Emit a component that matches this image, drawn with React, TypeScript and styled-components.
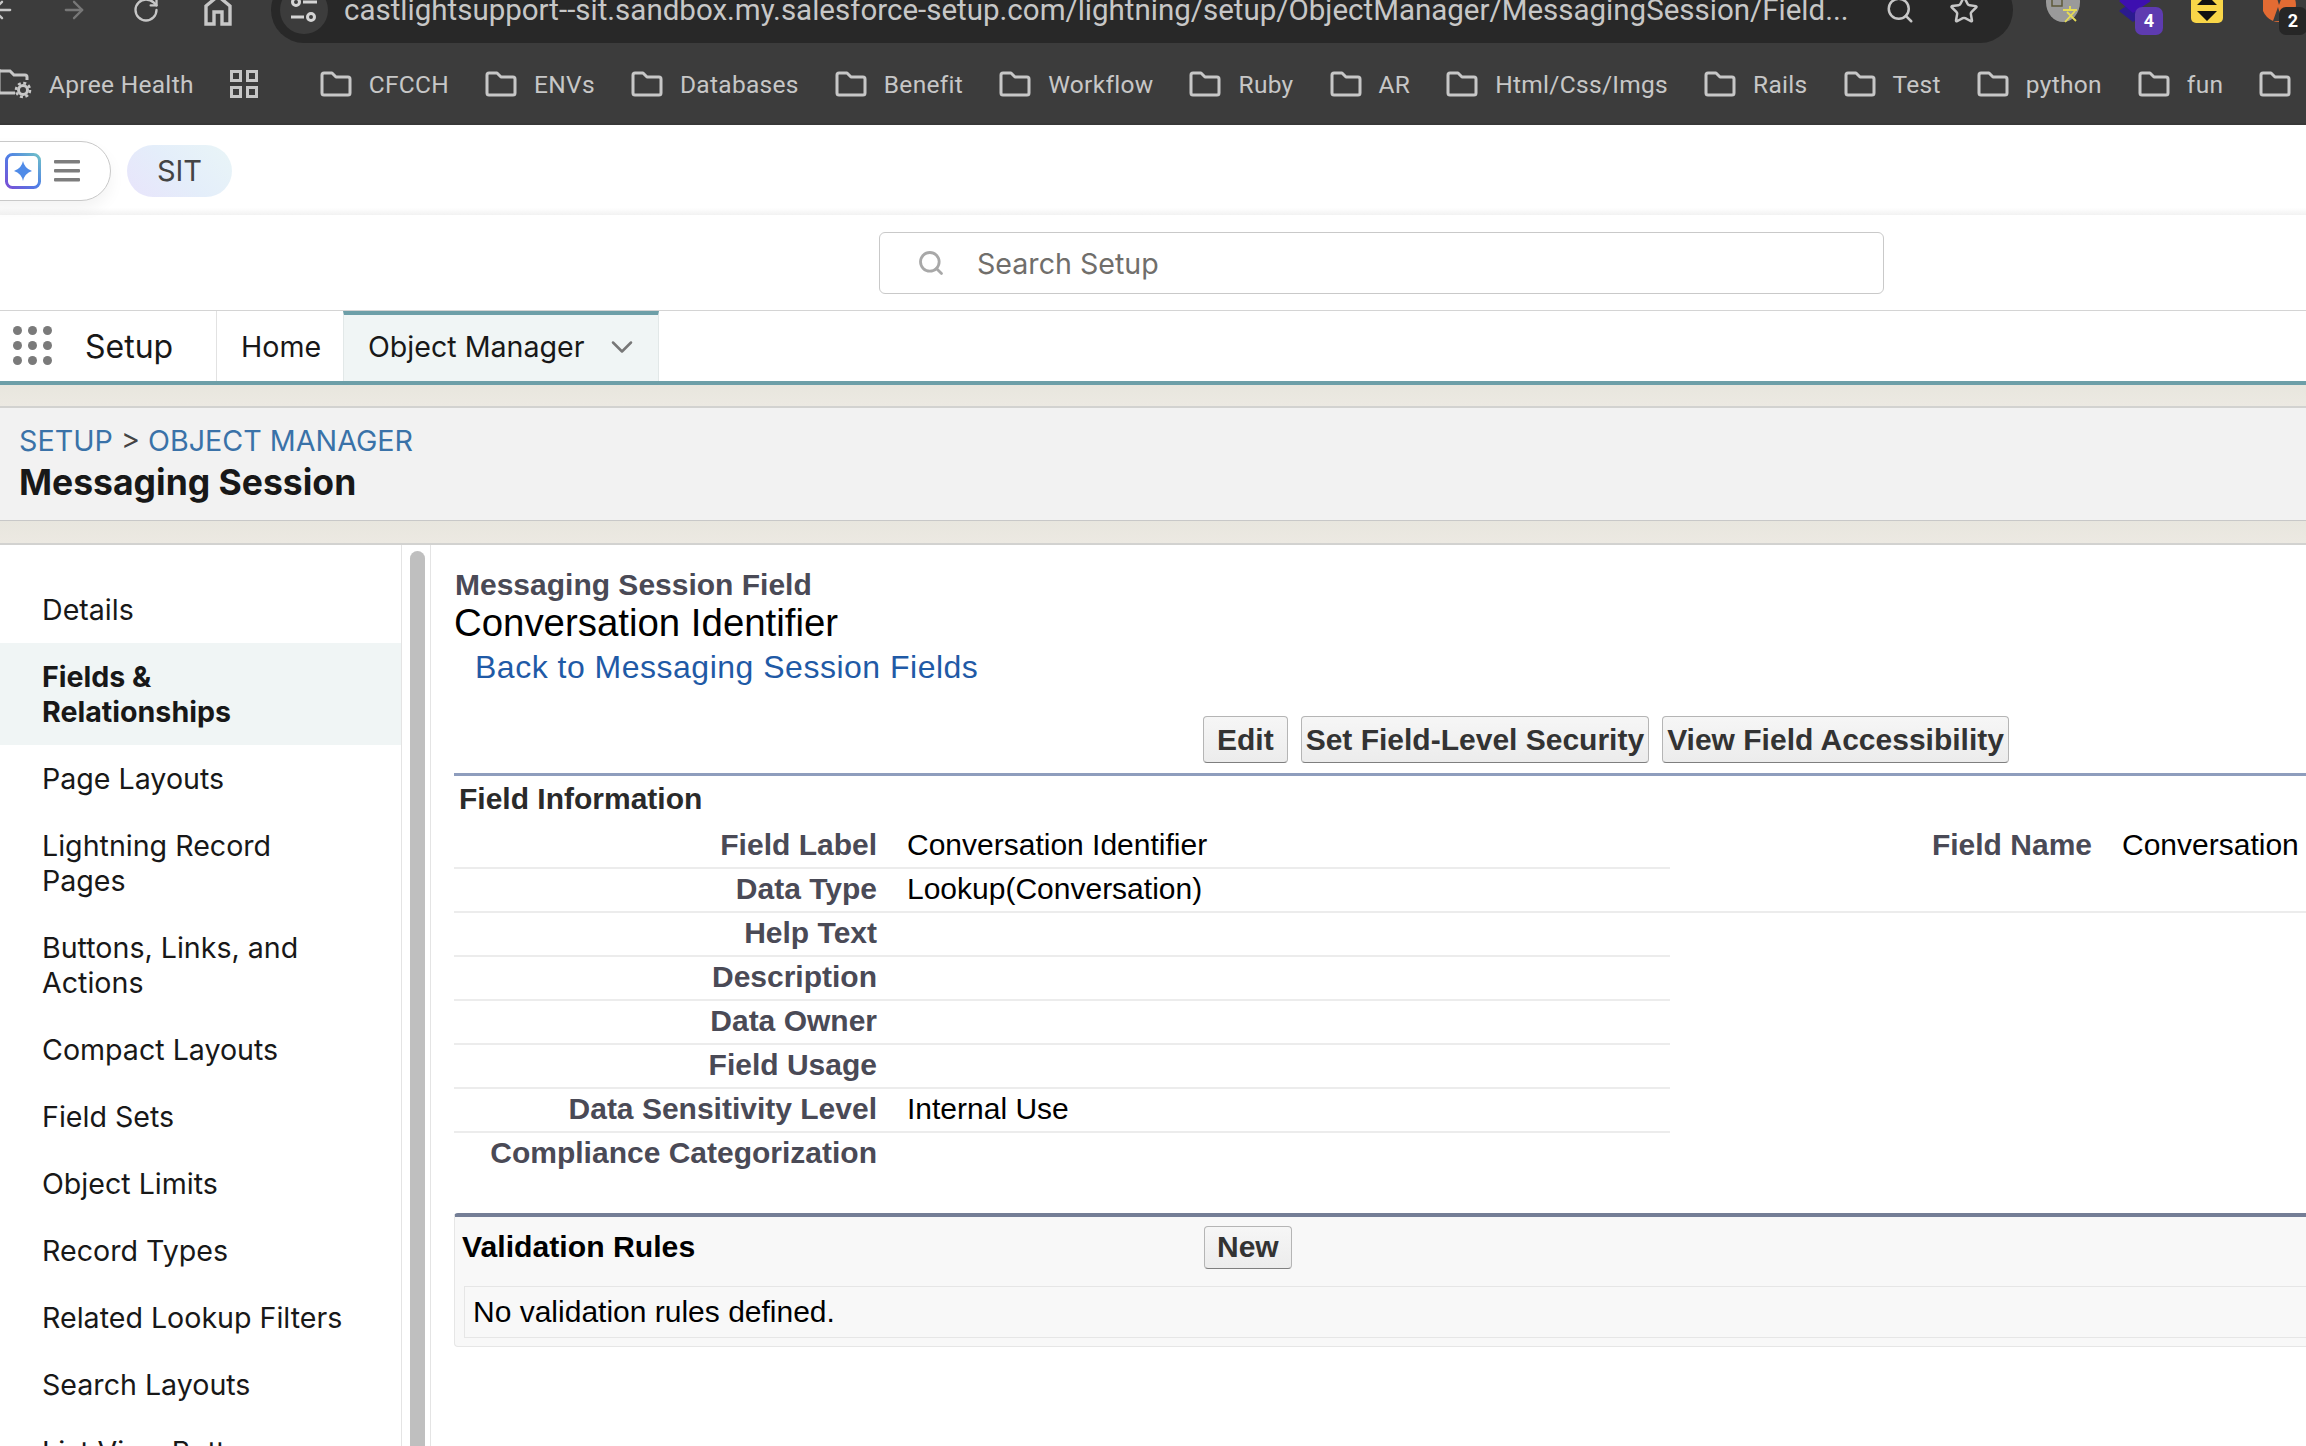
import styled, { createGlobalStyle } from "styled-components";
import { ArrowLeft, ArrowRight, RotateCw, ChevronDown, Search, Star } from "lucide-react";

const GlobalStyle = createGlobalStyle`
  html, body { margin: 0; padding: 0; background: #fff; }
  body { width: 2306px; height: 1446px; overflow: hidden; font-family: "Inter", "Liberation Sans", sans-serif; }
  * { box-sizing: border-box; }
`;

const Page = styled.div`
  width: 2306px;
  height: 1446px;
  overflow: hidden;
  display: flex;
  flex-direction: column;
`;

/* browser chrome */
const Chrome = styled.header`
  height: 125px;
  flex: none;
  background: #3c3c3c;
  overflow: hidden;
  border-bottom: 2px solid #383838;
`;
const Toolbar = styled.div`
  display: flex;
  align-items: center;
  height: 66px;
  margin-top: -23px;
  margin-left: -12px;
  color: #c7c7c7;
`;
const NavIcon = styled.span<{ $dim?: boolean }>`
  display: flex;
  width: 28px;
  margin-right: 44px;
  color: ${(p) => (p.$dim ? "#777" : "#c7c7c7")};
`;
const UrlPill = styled.div`
  width: 1742px;
  height: 66px;
  margin-left: -5px;
  border-radius: 33px;
  background: #282828;
  display: flex;
  align-items: center;
  padding-left: 9px;
`;
const TuneCircle = styled.span`
  width: 48px;
  height: 48px;
  border-radius: 50%;
  background: #3c3c3c;
  display: flex;
  align-items: center;
  justify-content: center;
  flex: none;
`;
const UrlText = styled.span`
  margin-left: 16px;
  width: 1518px;
  font-family: "Roboto", "Liberation Sans", sans-serif;
  font-size: 29.5px;
  font-variant-ligatures: none;
  color: #c7c7c7;
  white-space: nowrap;
  flex: none;
`;
const UrlIcon = styled.span`
  display: flex;
  margin-left: 12px;
  width: 52px;
  justify-content: center;
  color: #c7c7c7;
`;
const Ext = styled.span<{ $left: number }>`
  position: relative;
  display: block;
  flex: none;
  width: 40px;
  height: 34px;
  margin-top: 8px;
  margin-left: ${(p) => p.$left}px;
`;
const Badge = styled.span<{ $bg: string }>`
  position: absolute;
  top: 10px;
  left: 16px;
  width: 28px;
  height: 28px;
  border-radius: 7px;
  background: ${(p) => p.$bg};
  color: #fff;
  font-family: "Roboto", sans-serif;
  font-weight: 700;
  font-size: 18px;
  line-height: 28px;
  text-align: center;
`;
const Bookmarks = styled.div`
  display: flex;
  align-items: center;
  height: 62px;
  margin-top: 10px;
  margin-left: -2px;
  color: #c7c7c7;
  font-family: "Roboto", "Liberation Sans", sans-serif;
  font-size: 24.5px;
  letter-spacing: 0.3px;
  white-space: nowrap;
`;
const Bookmark = styled.span`
  display: flex;
  align-items: center;
  gap: 17px;
  margin-right: 36px;
`;
const Separator = styled.span`
  width: 2px;
  height: 32px;
  background: #6a6a6a;
  margin: 0 32px 0 -6px;
`;

/* salesforce header */
const AppHeader = styled.div`
  height: 90px;
  flex: none;
  display: flex;
  align-items: center;
  gap: 16px;
  padding-top: 2px;
  background: linear-gradient(#fff 0, #fff 92%, #f2f2f2 100%);
`;
const MenuPill = styled.div`
  width: 141px;
  height: 60px;
  margin-left: -30px;
  border: 1px solid #c9c9c9;
  border-radius: 30px;
  background: #fff;
  box-shadow: 0 8px 16px rgba(0, 0, 0, 0.05);
  display: flex;
  align-items: center;
  padding-left: 34px;
  gap: 13px;
`;
const EnvPill = styled.div`
  width: 105px;
  height: 52px;
  border-radius: 26px;
  background: linear-gradient(45deg, #e8e4fb, #e4eefa 50%, #e9f5f7);
  color: #444;
  font-size: 29px;
  line-height: 52px;
  text-align: center;
`;
const SearchRow = styled.div`
  height: 95px;
  flex: none;
  padding: 17px 0 0 879px;
`;
const SearchBox = styled.div`
  width: 1005px;
  height: 62px;
  border: 1px solid #c9c9c9;
  border-radius: 6px;
  display: flex;
  align-items: center;
  padding-left: 37px;
  gap: 32px;
  color: #706e6b;
  font-size: 28.6px;
`;
const NavBar = styled.nav`
  height: 75px;
  flex: none;
  display: flex;
  border-top: 1px solid #d4d4d4;
  border-bottom: 4px solid #6d9fa8;
`;
const Waffle = styled.div`
  display: grid;
  grid-template-columns: repeat(3, 9px);
  gap: 6px;
  margin: 15px 0 0 13px;
  width: 39px;
  align-content: start;
`;
const Dot = styled.i`
  width: 9px;
  height: 9px;
  border-radius: 50%;
  background: #7a7a7a;
`;
const AppName = styled.div`
  width: 165px;
  padding-left: 33px;
  font-size: 32px;
  line-height: 72px;
  color: #181818;
  border-right: 1px solid #e2e2e2;
`;
const NavTab = styled.div<{ $active?: boolean }>`
  display: flex;
  align-items: center;
  width: ${(p) => (p.$active ? "316px" : "126px")};
  padding: 0 0 3px ${(p) => (p.$active ? "24px" : "23px")};
  gap: 19px;
  font-size: 28.6px;
  color: #181818;
  border-top: 4px solid ${(p) => (p.$active ? "#6d9fa8" : "transparent")};
  background: ${(p) => (p.$active ? "#f0f5f5" : "#fff")};
  border-left: 1px solid ${(p) => (p.$active ? "#e2e8e8" : "transparent")};
  border-right: 1px solid ${(p) => (p.$active ? "#e2e8e8" : "transparent")};
`;
const BeigeStrip = styled.div<{ $h: number }>`
  height: ${(p) => p.$h}px;
  flex: none;
  background: linear-gradient(#e8e6de, #ece9e2);
  border-bottom: 2px solid #d2d2d0;
`;
const PageHead = styled.div`
  height: 113px;
  flex: none;
  background: #f2f2f2;
  border-bottom: 1px solid #c8c8c8;
  padding: 14px 0 0 19px;
`;
const Crumbs = styled.div`
  font-size: 28.7px;
  line-height: 38px;
  color: #444;
`;
const CrumbLink = styled.span`
  color: #3a72a8;
`;
const ObjectTitle = styled.h1`
  margin: 2px 0 0;
  font-size: 35.5px;
  line-height: 42px;
  font-weight: 700;
  color: #181818;
`;

/* body */
const Main = styled.div`
  flex: 1;
  display: flex;
  min-height: 0;
`;
const Sidebar = styled.ul`
  width: 402px;
  flex: none;
  margin: 0;
  padding: 31px 0 0;
  list-style: none;
  border-right: 1px solid #e4e4e4;
`;
const SideItem = styled.li<{ $active?: boolean }>`
  padding: 16px 58px 16px 42px;
  font-size: 28.6px;
  line-height: 35px;
  color: #181818;
  font-weight: ${(p) => (p.$active ? 700 : 400)};
  background: ${(p) => (p.$active ? "#f0f5f5" : "#fff")};
`;
const ScrollTrack = styled.div`
  width: 29px;
  flex: none;
  padding: 6px 5px 0 8px;
  border-right: 1px solid #e4e4e4;
`;
const ScrollThumb = styled.div`
  height: 100%;
  border-radius: 8px 8px 0 0;
  background: #bfbfbf;
`;
const Content = styled.div`
  flex: 1;
  min-width: 0;
  padding: 22px 0 0 23px;
  font-family: "Liberation Sans", Arial, sans-serif;
`;
const Eyebrow = styled.div`
  margin-left: 1px;
  font-size: 30px;
  line-height: 36px;
  font-weight: 700;
  color: #4a4a56;
`;
const FieldTitle = styled.h2`
  margin: 0;
  font-size: 38.4px;
  line-height: 40px;
  font-weight: 400;
  color: #000;
`;
const BackLink = styled.a`
  display: block;
  margin: 4px 0 0 21px;
  font-size: 32px;
  line-height: 40px;
  letter-spacing: 0.5px;
  color: #1f5aa6;
`;
const ButtonRow = styled.div`
  display: flex;
  gap: 13px;
  margin: 29px 0 10px 749px;
`;
const ClassicButton = styled.button<{ $pad: number; $h?: number }>`
  height: ${(p) => p.$h ?? 47}px;
  padding: 0 ${(p) => p.$pad}px;
  font-family: inherit;
  font-size: 30px;
  font-weight: 700;
  color: #333;
  background: linear-gradient(#f6f6f6, #ececec);
  border: 1px solid #b5b5b5;
  border-bottom-color: #7f7f7f;
  border-radius: 4px;
  white-space: nowrap;
`;
const SectionHead = styled.h3`
  margin: 0 0 4px;
  padding: 1px 0 0 5px;
  border-top: 3px solid #8e9dbd;
  font-size: 30px;
  line-height: 44px;
  font-weight: 700;
  color: #2a2a2a;
`;
const FieldGrid = styled.div`
  display: flex;
`;
const FieldColumn = styled.div<{ $w?: number }>`
  flex: ${(p) => (p.$w ? `0 0 ${p.$w}px` : "1")};
`;
const FieldRow = styled.div<{ $plain?: boolean; $h?: number }>`
  display: flex;
  height: ${(p) => p.$h ?? 44}px;
  padding-top: 3px;
  border-bottom: 2px solid ${(p) => (p.$plain ? "transparent" : "#ececec")};
  font-size: 30px;
  line-height: 34px;
`;
const FieldKey = styled.div<{ $w: number }>`
  width: ${(p) => p.$w}px;
  flex: none;
  text-align: right;
  font-weight: 700;
  color: #4a4a56;
`;
const FieldValue = styled.div`
  margin-left: 30px;
  white-space: nowrap;
  color: #000;
`;
const RelatedBlock = styled.section`
  margin-top: 36px;
  height: 134px;
  background: #f8f8f8;
  border: 1px solid #e6e6e6;
  border-top: 4px solid #747e96;
  border-right: 0;
  border-radius: 4px 0 0 4px;
`;
const RelatedHead = styled.div`
  display: flex;
  align-items: center;
  height: 69px;
  padding-left: 7px;
  padding-bottom: 9px;
`;
const RelatedTitle = styled.h3`
  margin: 0;
  width: 742px;
  font-size: 30.2px;
  font-weight: 700;
  color: #000;
`;
const RelatedBody = styled.div`
  margin-left: 9px;
  height: 52px;
  padding-left: 8px;
  background: #f8f8f8;
  border: 1px solid #e6e6e6;
  border-right: 0;
  font-size: 30px;
  line-height: 50px;
  color: #000;
`;

const FolderIcon = () => (
  <svg width="32" height="26" viewBox="0 0 32 26" fill="none" stroke="#c7c7c7" strokeWidth="3" strokeLinejoin="round">
    <path d="M2 4 Q2 2 4 2 H12 L16 6 H28 Q30 6 30 8 V22 Q30 24 28 24 H4 Q2 24 2 22 Z" />
  </svg>
);

const ChromeHome = () => (
  <svg width="28" height="32" viewBox="0 0 28 32" fill="none" stroke="#c7c7c7" strokeWidth="3.4">
    <path d="M2 30 V12 L14 2 L26 12 V30 H18 V18 H10 V30 Z" />
  </svg>
);

const TuneIcon = () => (
  <svg width="28" height="26" viewBox="0 0 28 26" fill="none" stroke="#d4d4d4" strokeWidth="3">
    <circle cx="6" cy="5" r="3.5" />
    <path d="M13 5 H27 M1 20 H14" />
    <circle cx="21" cy="20" r="3.5" />
  </svg>
);

const AppsIcon = () => (
  <svg width="28" height="28" viewBox="0 0 28 28" fill="none" stroke="#c7c7c7" strokeWidth="3">
    <rect x="1.5" y="1.5" width="9" height="9" />
    <rect x="17.5" y="1.5" width="9" height="9" />
    <rect x="1.5" y="17.5" width="9" height="9" />
    <rect x="17.5" y="17.5" width="9" height="9" />
  </svg>
);

const FolderGear = () => (
  <svg width="34" height="30" viewBox="0 0 34 30" fill="none" stroke="#c7c7c7" strokeWidth="3">
    <path d="M17 24 H3 Q1 24 1 22 V-2 M1 2 H12 L16 6 H27 Q29 6 29 8 V11" />
    <circle cx="25" cy="21" r="4.5" />
    <circle cx="25" cy="21" r="7" strokeDasharray="3 2.5" strokeWidth="2.6" />
  </svg>
);

const SparkBox = () => (
  <svg width="36" height="36" viewBox="0 0 36 36" fill="none">
    <defs>
      <linearGradient id="sparkEdge" x1="0" y1="1" x2="1" y2="0">
        <stop offset="0" stopColor="#7a4fd6" />
        <stop offset="0.5" stopColor="#4f7fe6" />
        <stop offset="1" stopColor="#6fc0c8" />
      </linearGradient>
    </defs>
    <rect x="1.5" y="1.5" width="33" height="33" rx="6" stroke="url(#sparkEdge)" strokeWidth="3" />
    <path d="M18 8 Q19.5 15.5 27 18 Q19.5 20.5 18 28 Q16.500 20.500 9 18 Q16.500 15.500 18 8 Z" fill="#4f8be8" />
  </svg>
);

const Hamburger = () => (
  <svg width="26" height="22" viewBox="0 0 26 22" fill="#7d7d7d">
    <rect y="0" width="26" height="3.4" rx="1" />
    <rect y="9" width="26" height="3.4" rx="1" />
    <rect y="18" width="26" height="3.4" rx="1" />
  </svg>
);

const TranslateExt = () => (
  <svg width="40" height="34" viewBox="0 0 40 34">
    <ellipse cx="20" cy="5" rx="17" ry="20" fill="#9a9a9a" />
    <path d="M9 -6 H19 V9 H9 Z" fill="none" stroke="#5d5a3a" strokeWidth="1.500" />
    <path d="M20 13 H34 M27 9 V13 M22 25 L32 14 M24 15 L33 24" stroke="#e6dc55" strokeWidth="1.800" fill="none" />
  </svg>
);

const StackExt = () => (
  <svg width="34" height="26" viewBox="0 0 34 26">
    <path d="M0 14 L14 4 L30 14 L14 25 Z" fill="#2b1b8f" />
    <path d="M0 4 L14 -6 L32 4 L14 16 Z" fill="#3d0fb0" />
  </svg>
);

const YellowExt = () => (
  <svg width="32" height="26" viewBox="0 0 32 26">
    <rect x="0" y="-8" width="32" height="34" rx="5" fill="#f9d648" />
    <path d="M6 8 L16 -2 L26 8 Z M6 14 H26 L16 24 Z" fill="#111" />
  </svg>
);

const FoxExt = () => (
  <svg width="36" height="26" viewBox="0 0 36 26">
    <circle cx="16" cy="8" r="17" fill="#e36b33" />
    <path d="M12 -6 L16 8 L21 -6 M10 24 L15 10 L19 24" fill="#3c3c3c" />
  </svg>
);

const BOOKMARKS = ["CFCCH", "ENVs", "Databases", "Benefit", "Workflow", "Ruby", "AR", "Html/Css/Imgs", "Rails", "Test", "python", "fun", ""];

const SIDE_ITEMS = [
  "Details",
  "Fields & Relationships",
  "Page Layouts",
  "Lightning Record Pages",
  "Buttons, Links, and Actions",
  "Compact Layouts",
  "Field Sets",
  "Object Limits",
  "Record Types",
  "Related Lookup Filters",
  "Search Layouts",
  "List View Button Layout",
];

const LEFT_FIELDS = [
  { key: "Field Label", value: "Conversation Identifier" },
  { key: "Data Type", value: "Lookup(Conversation)" },
  { key: "Help Text", value: "" },
  { key: "Description", value: "" },
  { key: "Data Owner", value: "" },
  { key: "Field Usage", value: "" },
  { key: "Data Sensitivity Level", value: "Internal Use" },
  { key: "Compliance Categorization", value: "" },
];

export default function App() {
  return (
    <Page>
      <GlobalStyle />
      <Chrome>
        <Toolbar>
          <NavIcon><ArrowLeft size={28} /></NavIcon>
          <NavIcon $dim><ArrowRight size={28} /></NavIcon>
          <NavIcon><RotateCw size={28} /></NavIcon>
          <NavIcon><ChromeHome /></NavIcon>
          <UrlPill>
            <TuneCircle><TuneIcon /></TuneCircle>
            <UrlText>castlightsupport--sit.sandbox.my.salesforce-setup.com/lightning/setup/ObjectManager/MessagingSession/Field...</UrlText>
            <UrlIcon><Search size={30} /></UrlIcon>
            <UrlIcon><Star size={30} /></UrlIcon>
          </UrlPill>
          <Ext $left={30}><TranslateExt /></Ext>
          <Ext $left={36}><StackExt /><Badge $bg="#5e3bb0">4</Badge></Ext>
          <Ext $left={32}><YellowExt /></Ext>
          <Ext $left={32}><FoxExt /><Badge $bg="#262626">2</Badge></Ext>
        </Toolbar>
        <Bookmarks>
          <Bookmark><FolderGear />Apree Health</Bookmark>
          <Bookmark><AppsIcon /></Bookmark>
          <Separator />
          {BOOKMARKS.map((name, i) => (
            <Bookmark key={i}><FolderIcon />{name}</Bookmark>
          ))}
        </Bookmarks>
      </Chrome>

      <AppHeader>
        <MenuPill><SparkBox /><Hamburger /></MenuPill>
        <EnvPill>SIT</EnvPill>
      </AppHeader>
      <SearchRow>
        <SearchBox>
          <Search size={28} color="#a8a8a8" strokeWidth={2.4} />
          Search Setup
        </SearchBox>
      </SearchRow>
      <NavBar>
        <Waffle>
          {Array.from({ length: 9 }, (_, i) => <Dot key={i} />)}
        </Waffle>
        <AppName>Setup</AppName>
        <NavTab>Home</NavTab>
        <NavTab $active>
          Object Manager
          <ChevronDown size={36} color="#777" strokeWidth={1.7} />
        </NavTab>
      </NavBar>
      <BeigeStrip $h={23} />
      <PageHead>
        <Crumbs><CrumbLink>SETUP</CrumbLink> &gt; <CrumbLink>OBJECT MANAGER</CrumbLink></Crumbs>
        <ObjectTitle>Messaging Session</ObjectTitle>
      </PageHead>
      <BeigeStrip $h={24} />

      <Main>
        <Sidebar>
          {SIDE_ITEMS.map((item) => (
            <SideItem key={item} $active={item.startsWith("Fields")}>{item}</SideItem>
          ))}
        </Sidebar>
        <ScrollTrack><ScrollThumb /></ScrollTrack>
        <Content>
          <Eyebrow>Messaging Session Field</Eyebrow>
          <FieldTitle>Conversation Identifier</FieldTitle>
          <BackLink>Back to Messaging Session Fields</BackLink>
          <ButtonRow>
            <ClassicButton $pad={13}>Edit</ClassicButton>
            <ClassicButton $pad={4}>Set Field-Level Security</ClassicButton>
            <ClassicButton $pad={4}>View Field Accessibility</ClassicButton>
          </ButtonRow>
          <SectionHead>Field Information</SectionHead>
          <FieldGrid>
            <FieldColumn $w={1216}>
              {LEFT_FIELDS.map((f, i) => (
                <FieldRow key={f.key} $plain={i === LEFT_FIELDS.length - 1}>
                  <FieldKey $w={423}>{f.key}</FieldKey>
                  <FieldValue>{f.value}</FieldValue>
                </FieldRow>
              ))}
            </FieldColumn>
            <FieldColumn>
              <FieldRow $h={88}>
                <FieldKey $w={422}>Field Name</FieldKey>
                <FieldValue>Conversation</FieldValue>
              </FieldRow>
            </FieldColumn>
          </FieldGrid>
          <RelatedBlock>
            <RelatedHead>
              <RelatedTitle>Validation Rules</RelatedTitle>
              <ClassicButton $pad={12} $h={43}>New</ClassicButton>
            </RelatedHead>
            <RelatedBody>No validation rules defined.</RelatedBody>
          </RelatedBlock>
        </Content>
      </Main>
    </Page>
  );
}
